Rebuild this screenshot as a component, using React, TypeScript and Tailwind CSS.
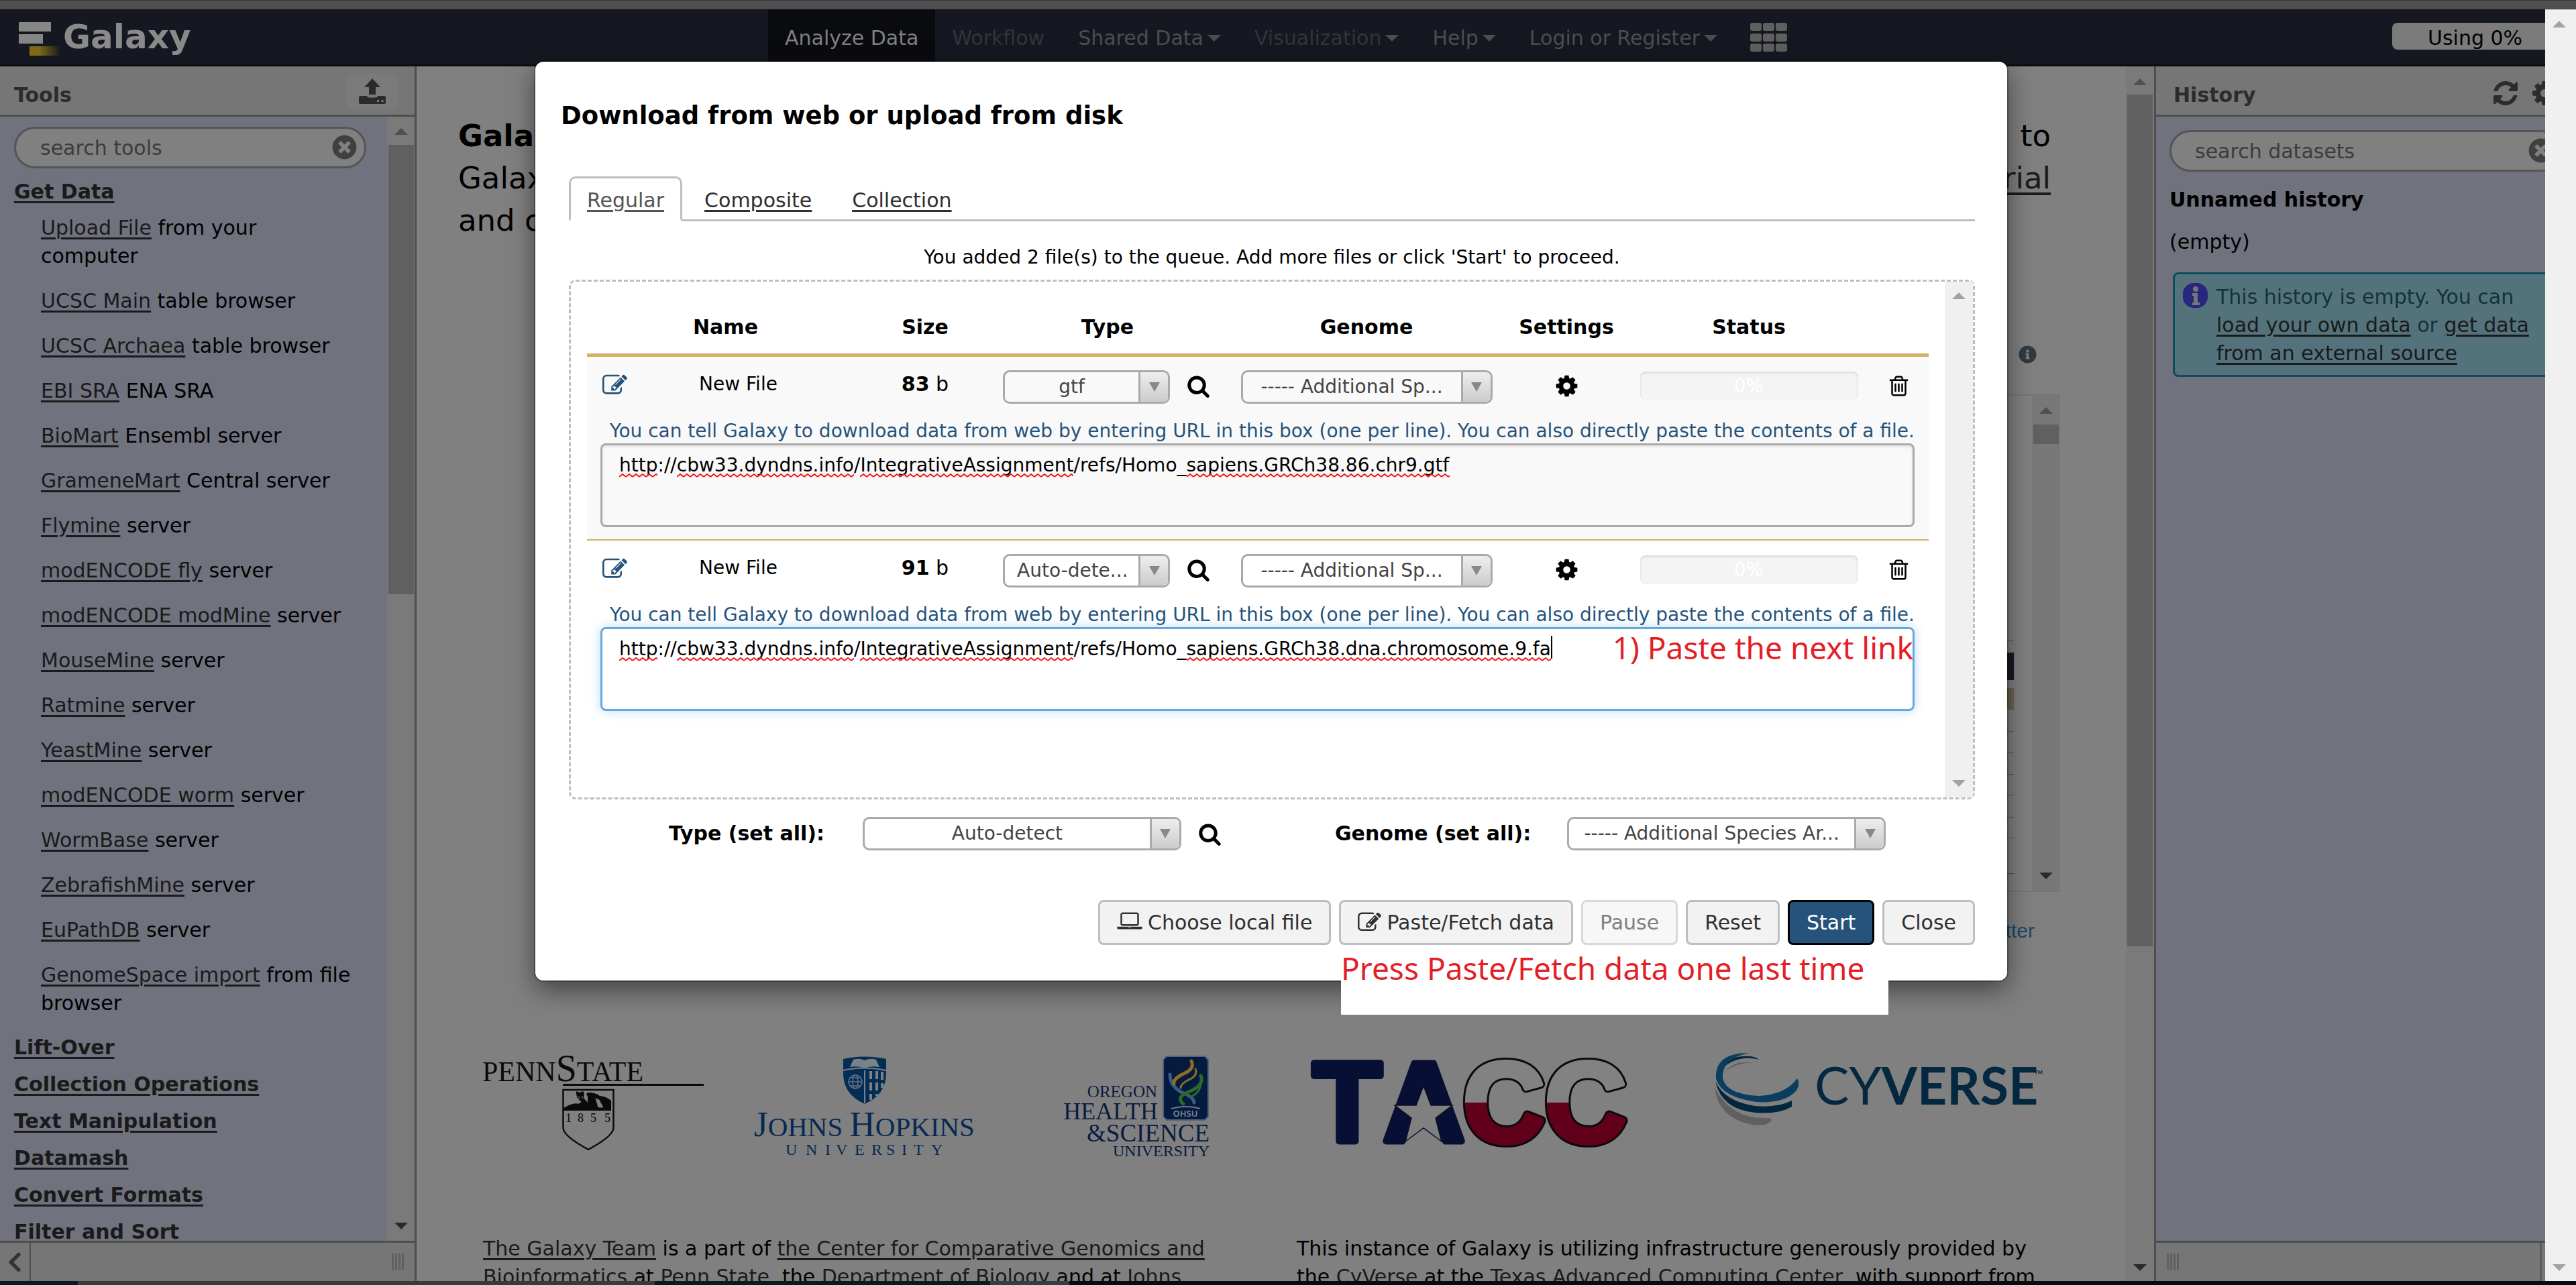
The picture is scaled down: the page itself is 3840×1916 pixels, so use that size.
import type { ReactNode } from "react";
import { FaChevronLeft, FaInfoCircle, FaTimesCircle } from "react-icons/fa";

const ICONS = {
  edit: "M888 1184l116-116-152-152-116 116v56h96v96h56zm440-720q-16-16-33 1l-350 350q-17 17-1 33t33-1l350-350q17-17 1-33zm80 594v190q0 119-84.5 203.5t-203.5 84.5h-832q-119 0-203.5-84.5t-84.5-203.5v-832q0-119 84.5-203.5t203.5-84.5h832q63 0 117 25 15 7 18 23 3 17-9 29l-49 49q-14 14-32 8-23-6-45-6h-832q-66 0-113 47t-47 113v832q0 66 47 113t113 47h832q66 0 113-47t47-113v-126q0-13 9-22l64-64q15-15 35-7t20 29zm-96-738l288 288-672 672h-288v-288zm444 132l-92 92-288-288 92-92q28-28 68-28t68 28l152 152q28 28 28 68t-28 68z",
  trash:
    "M704 736v576q0 14-9 23t-23 9h-64q-14 0-23-9t-9-23v-576q0-14 9-23t23-9h64q14 0 23 9t9 23zm256 0v576q0 14-9 23t-23 9h-64q-14 0-23-9t-9-23v-576q0-14 9-23t23-9h64q14 0 23 9t9 23zm256 0v576q0 14-9 23t-23 9h-64q-14 0-23-9t-9-23v-576q0-14 9-23t23-9h64q14 0 23 9t9 23zm128 724v-948h-896v948q0 22 7 40.5t14.5 27 10.5 8.5h832q3 0 10.5-8.5t14.5-27 7-40.5zm-672-1076h448l-48-117q-7-9-17-11h-317q-10 2-17 11zm928 32v64q0 14-9 23t-23 9h-96v948q0 83-47 143.5t-113 60.5h-832q-66 0-113-58.5t-47-141.5v-952h-96q-14 0-23-9t-9-23v-64q0-14 9-23t23-9h309l70-167q15-37 54-63t79-26h320q40 0 79 26t54 63l70 167h309q14 0 23 9t9 23z",
  cog: "M1152 896q0-106-75-181t-181-75-181 75-75 181 75 181 181 75 181-75 75-181zm512-109v222q0 12-8 23t-20 13l-185 28q-19 54-39 91 35 50 107 138 10 12 10 25t-9 23q-27 37-99 108t-94 71q-12 0-26-9l-138-108q-44 23-91 38-16 136-29 186-7 28-36 28h-222q-14 0-24.5-8.5t-11.5-21.5l-28-184q-49-16-90-37l-141 107q-10 9-25 9-14 0-25-11-126-114-165-168-7-10-7-23 0-12 8-23 15-21 51-66.5t54-70.5q-27-50-41-99l-183-27q-13-2-21-12.5t-8-23.5v-222q0-12 8-23t19-13l186-28q14-46 39-92-40-57-107-138-10-12-10-24 0-10 9-23 26-36 98.5-107.5t94.5-71.5q13 0 26 10l138 107q44-23 91-38 16-136 29-186 7-28 36-28h222q14 0 24.5 8.5t11.5 21.5l28 184q49 16 90 37l142-107q9-9 24-9 13 0 25 10 129 119 165 170 7 8 7 22 0 12-8 23-15 21-51 66.5t-54 70.5q26 50 41 98l183 28q13 2 21 12.5t8 23.5z",
  search:
    "M1216 832q0-185-131.5-316.5t-316.5-131.5-316.5 131.5-131.5 316.5 131.5 316.5 316.5 131.5 316.5-131.5 131.5-316.5zm512 832q0 52-38 90t-90 38q-54 0-90-38l-343-342q-179 124-399 124-143 0-273.5-55.5t-225-150-150-225-55.5-273.5 55.5-273.5 150-225 225-150 273.5-55.5 273.5 55.5 225 150 150 225 55.5 273.5q0 220-124 399l343 343q37 37 37 90z",
  refresh:
    "M1639 1056q0 5-1 7-64 268-268 434.5t-478 166.5q-146 0-282.5-55t-243.5-157l-129 129q-19 19-45 19t-45-19-19-45v-448q0-26 19-45t45-19h448q26 0 45 19t19 45-19 45l-137 137q71 66 161 102t187 36q134 0 250-65t186-179q11-17 53-117 8-23 30-23h192q13 0 22.5 9.5t9.5 22.5zm25-800v448q0 26-19 45t-45 19h-448q-26 0-45-19t-19-45 19-45l138-138q-148-137-349-137-134 0-250 65t-186 179q-11 17-53 117-8 23-30 23h-199q-13 0-22.5-9.5t-9.5-22.5v-7q65-268 270-434.5t480-166.5q146 0 284 55.5t245 156.5l130-129q19-19 45-19t45 19 19 45z",
};

const LAPTOP =
  "M416 1152q-66 0-113-47t-47-113v-704q0-66 47-113t113-47h1088q66 0 113 47t47 113v704q0 66-47 113t-113 47h-1088zm-32-864v704q0 13 9.5 22.5t22.5 9.5h1088q13 0 22.5-9.5t9.5-22.5v-704q0-13-9.5-22.5t-22.5-9.5h-1088q-13 0-22.5 9.5t-9.5 22.5zm1376 928h160v96q0 40-47 68t-113 28h-1600q-66 0-113-28t-47-68v-96h1760zm-720 96q16 0 16-16t-16-16h-160q-16 0-16 16t16 16h160z";

function Icon({ name, className }: { name: keyof typeof ICONS; className: string }) {
  return (
    <svg viewBox="0 0 1792 1792" className={className} fill="currentColor" aria-hidden="true">
      <path d={ICONS[name]} />
    </svg>
  );
}

function Arrow({ up = false, className = "" }: { up?: boolean; className?: string }) {
  return (
    <svg viewBox="0 0 20 10" className={`h-[10px] w-5 shrink-0 ${className}`} fill="currentColor" aria-hidden="true">
      <path d={up ? "M10 0 20 10H0Z" : "M0 0H20L10 10Z"} />
    </svg>
  );
}

const link = "underline decoration-[3px] underline-offset-[4px] text-[#1a1a1a]";

function A({ children, className = link }: { children: ReactNode; className?: string }) {
  return (
    <a href="#" className={className}>
      {children}
    </a>
  );
}

/* ---------- Masthead ---------- */

function NavItem({ label, caret = false, tone }: { label: string; caret?: boolean; tone: string }) {
  return (
    <a href="#" className={`flex h-full items-center px-[25px] pt-1 ${tone}`}>
      {label}
      {caret && <Arrow className="ml-1.5 text-[#4d4d4d]" />}
    </a>
  );
}

function Masthead() {
  return (
    <header className="flex h-[85px] shrink-0 items-stretch border-b-[3px] border-[#0c0c12] bg-[#151820]">
      <a href="#" className="flex w-[1145px] items-start pl-7 text-[50px] font-bold leading-[58px] text-[#8a8a8a]">
        <svg viewBox="0 0 66 54" className="mt-[18px] h-[54px] w-[66px]" aria-hidden="true">
          <defs>
            <linearGradient id="tail" x1="0" x2="1">
              <stop offset="0.3" stopColor="#7d6c15" />
              <stop offset="1" stopColor="#7d6c15" stopOpacity="0" />
            </linearGradient>
          </defs>
          <rect x="0" y="1" width="48" height="14" fill="#868686" />
          <rect x="0" y="19" width="36" height="14" fill="#868686" />
          <rect x="16" y="37" width="46" height="14" fill="url(#tail)" />
        </svg>
        <span className="mt-3">Galaxy</span>
      </a>
      <nav className="flex h-full items-center">
        <NavItem label="Analyze Data" tone="bg-[#0a0b0f] text-[#808080]" />
        <NavItem label="Workflow" tone="text-[#33343a]" />
        <NavItem label="Shared Data" caret tone="text-[#4d4d4d]" />
        <NavItem label="Visualization" caret tone="text-[#33343a]" />
        <NavItem label="Help" caret tone="text-[#4d4d4d]" />
        <NavItem label="Login or Register" caret tone="text-[#4d4d4d]" />
        <a href="#" aria-label="Apps" className="ml-6">
          <svg viewBox="0 0 56 43" className="h-[43px] w-14" fill="#5f5f5f" aria-hidden="true">
            {[0, 19, 38].map((x) =>
              [0, 16, 31].map((y) => <rect key={`${x}-${y}`} x={x} y={y} width="17" height="12" rx="3" />),
            )}
          </svg>
        </a>
      </nav>
      <div className="ml-auto mt-5 h-10 w-[228px] rounded-l-lg bg-[#7b7b7b] pl-[53px] leading-[46px] text-black">
        Using 0%
      </div>
    </header>
  );
}

/* ---------- Tool panel ---------- */

const tools: [string, string][] = [
  ["Upload File", "from your computer"],
  ["UCSC Main", "table browser"],
  ["UCSC Archaea", "table browser"],
  ["EBI SRA", "ENA SRA"],
  ["BioMart", "Ensembl server"],
  ["GrameneMart", "Central server"],
  ["Flymine", "server"],
  ["modENCODE fly", "server"],
  ["modENCODE modMine", "server"],
  ["MouseMine", "server"],
  ["Ratmine", "server"],
  ["YeastMine", "server"],
  ["modENCODE worm", "server"],
  ["WormBase", "server"],
  ["ZebrafishMine", "server"],
  ["EuPathDB", "server"],
  ["GenomeSpace import", "from file browser"],
];

const sections = [
  "Lift-Over",
  "Collection Operations",
  "Text Manipulation",
  "Datamash",
  "Convert Formats",
  "Filter and Sort",
];

function Grip() {
  return (
    <span className="flex h-[25px] gap-0.5" aria-hidden="true">
      <i className="w-[3px] bg-[#606060]" />
      <i className="w-[3px] bg-[#606060]" />
      <i className="w-[3px] bg-[#606060]" />
      <i className="w-[3px] bg-[#606060]" />
    </span>
  );
}

function ToolPanel() {
  return (
    <aside className="flex w-[621px] shrink-0 flex-col border-r-[3px] border-[#4e4e4e]">
      <div className="flex h-[75px] shrink-0 items-start justify-between border-b-[3px] border-[#4e4e4e] bg-[#767676] pl-[21px] pr-[25px]">
        <h2 className="mt-[22px] font-bold leading-[42px] text-[#2c2c2c]">Tools</h2>
        <button
          aria-label="Upload"
          className="mt-2.5 flex h-[54px] w-[76px] items-center justify-center rounded-lg bg-[#7a7a7a] text-[#2b2b2b]"
        >
          <svg viewBox="0 0 40 38" className="h-[38px] w-10" fill="currentColor" aria-hidden="true">
            <path d="M20 0 32 13H25V24H15V13H8Z" />
            <path
              fillRule="evenodd"
              d="M2 26H11.500Q13 28.500 16 28.500H24Q27 28.500 28.500 26H38Q40 26 40 28V36Q40 38 38 38H2Q0 38 0 36V28Q0 26 2 26ZM27 32V35H30V32ZM33.500 32V35H36.500V32Z"
            />
          </svg>
        </button>
      </div>
      <div className="flex min-h-0 flex-1 bg-[#70727e]">
        <div className="min-w-0 flex-1 overflow-hidden pl-[21px] pt-[15px]">
          <div className="relative w-[525px]">
            <input
              aria-label="search tools"
              placeholder="search tools"
              className="h-[62px] w-full rounded-full border-[3px] border-[#555] bg-[#808080] pl-9 text-[#3c3c3c] placeholder:text-[#3c3c3c]"
            />
            <FaTimesCircle className="absolute right-[14px] top-[12px] size-[37px] text-[#404040]" />
          </div>
          <h3 className="mt-[14px] font-bold leading-[42px]">
            <A>Get Data</A>
          </h3>
          <ul className="mt-3 flex flex-col gap-[25px] pl-10 pr-12 leading-[42px] text-black">
            {tools.map(([name, rest]) => (
              <li key={name}>
                <A>{name}</A> {rest}
              </li>
            ))}
          </ul>
          <ul className="mt-6 flex flex-col gap-[13px] font-bold leading-[42px]">
            {sections.map((s) => (
              <li key={s} className="shrink-0">
                <A>{s}</A>
              </li>
            ))}
          </ul>
        </div>
        <div className="flex w-[41px] flex-col items-center bg-[#7a7a7a] pb-[17px] pt-[17px]">
          <Arrow up className="text-[#505050]" />
          <div className="mt-[15px] h-[670px] w-[38px] bg-[#606060]" />
          <Arrow className="mt-auto text-[#2a2a2a]" />
        </div>
      </div>
      <div className="flex h-[60px] shrink-0 items-center border-t-[3px] border-[#4e4e4e] bg-[#767676]">
        <button
          aria-label="Collapse panel"
          className="flex h-full w-[46px] items-center justify-center border-r-2 border-[#4e4e4e] text-[#333]"
        >
          <FaChevronLeft className="size-[34px]" />
        </button>
        <div className="ml-auto mr-4">
          <Grip />
        </div>
      </div>
    </aside>
  );
}

/* ---------- Sponsor logos ---------- */

function PennState() {
  return (
    <svg viewBox="720 1566 366 164" className="h-[164px] w-[366px]" role="img" aria-label="Penn State">
      <g fill="#0a0a0a" fontFamily="Liberation Serif">
        <text x="719" y="1612" fontSize="42">
          PENN<tspan fontSize="56">S</tspan>TATE
        </text>
        <text y="1673" fontSize="18" x="843 861 880 901">
          1855
        </text>
        <rect x="839" y="1616" width="210" height="3" />
      </g>
      <path
        d="M839.500 1625H914.500V1682Q914 1694 877 1714Q840 1694 839.500 1682Z"
        fill="none"
        stroke="#0d0d0d"
        strokeWidth="2.500"
      />
      <path
        d="M840 1656V1652L848 1648Q858 1644 862 1646L867 1643Q858 1638 859 1627L864 1629 869 1627Q872 1630 870 1637L876 1644V1634Q872 1632 876 1629Q888 1629 894 1634Q904 1635 911 1641V1656Z"
        fill="#0a0a0a"
      />
      <path d="M888 1638 892 1651H899L893 1640ZM863 1634V1640M868 1634V1639" fill="#808080" stroke="#777" />
    </svg>
  );
}

function JohnsHopkins() {
  return (
    <svg viewBox="1086 1566 432 164" className="h-[164px] w-[432px]" role="img" aria-label="Johns Hopkins University">
      <path d="M1257 1579Q1290 1572 1321 1579V1600Q1321 1632 1289 1646Q1257 1632 1257 1600Z" fill="#032d55" />
      <path
        d="M1267 1591 1272 1580Q1281 1577 1289 1581Q1298 1577 1306 1580L1311 1591Q1298 1589 1289 1593Q1280 1589 1267 1591Z"
        fill="#7a8188"
      />
      <path d="M1257 1596Q1289 1589 1321 1596" stroke="#7a8188" strokeWidth="2" fill="none" />
      <path d="M1289 1596V1645" stroke="#7a8188" strokeWidth="2" />
      <path d="M1298 1597V1640M1307 1597V1634M1315 1598V1622" stroke="#7a8188" strokeWidth="4" strokeDasharray="12 5" />
      <g fill="none" stroke="#5f7286" strokeWidth="1.500">
        <ellipse cx="1275" cy="1613" rx="10" ry="10" />
        <ellipse cx="1275" cy="1613" rx="4" ry="10" />
        <path d="M1265 1613H1285M1267 1607H1283M1267 1619H1283" />
      </g>
      <g fill="#062a52" fontFamily="Liberation Serif">
        <text x="1124" y="1694" fontSize="41">
          <tspan fontSize="53">J</tspan>OHNS <tspan fontSize="53">H</tspan>OPKINS
        </text>
        <text y="1722" fontSize="24" x="1171 1201 1230 1246 1274 1299 1321 1344 1362 1388">
          UNIVERSITY
        </text>
      </g>
    </svg>
  );
}

function Ohsu() {
  return (
    <svg
      viewBox="1518 1566 362 164"
      className="h-[164px] w-[362px]"
      role="img"
      aria-label="Oregon Health and Science University"
    >
      <path
        d="M1739 1575H1796L1801 1580V1665L1796 1670H1739L1734 1665V1580Z"
        fill="#041b3f"
        stroke="#52647c"
        strokeWidth="2"
      />
      <g fill="none" strokeLinecap="round" strokeWidth="5">
        <path d="M1744 1602Q1744 1618 1760 1628Q1780 1636 1780 1644" stroke="#3d5a84" />
        <path d="M1776 1582Q1782 1594 1762 1602Q1748 1610 1750 1616" stroke="#8c6d22" />
        <path d="M1782 1594Q1786 1604 1772 1610Q1760 1616 1760 1622" stroke="#8c6d22" strokeWidth="3" />
        <path d="M1790 1604Q1796 1618 1772 1628Q1752 1636 1764 1646" stroke="#2c6a2c" />
        <path d="M1790 1610Q1792 1628 1774 1636" stroke="#2c6a2c" strokeWidth="3" />
      </g>
      <path d="M1746 1653Q1767 1647 1789 1653" stroke="#6d7885" strokeWidth="2" fill="none" />
      <text x="1767" y="1665" fontSize="13" fontFamily="Noto Sans" fontWeight="600" fill="#7f868e" textAnchor="middle">
        OHSU
      </text>
      <g fill="#0a1c3f" fontFamily="Liberation Serif">
        <text x="1725" y="1636" fontSize="25" textAnchor="end">
          OREGON
        </text>
        <text x="1726" y="1669" fontSize="36" textAnchor="end">
          HEALTH
        </text>
        <text x="1803" y="1702" fontSize="37" textAnchor="end">
          &amp;SCIENCE
        </text>
        <text x="1803" y="1724" fontSize="24" textAnchor="end">
          UNIVERSITY
        </text>
      </g>
    </svg>
  );
}

function Tacc() {
  return (
    <svg viewBox="1880 1566 609 164" className="h-[164px] w-[609px]" role="img" aria-label="TACC">
      <defs>
        <linearGradient id="texas" gradientUnits="userSpaceOnUse" x1="0" x2="0" y1="1583" y2="1705">
          <stop offset="0.500" stopColor="#828282" />
          <stop offset="0.500" stopColor="#60001a" />
        </linearGradient>
      </defs>
      <g fontFamily="Liberation Sans" fontWeight="700" fontSize="168" strokeLinejoin="round">
        <text y="1702" x="1957 2062" fill="#070f35" stroke="#070f35" strokeWidth="10">
          TA
        </text>
        <text y="1702" x="2181 2303" fill="url(#texas)" stroke="#0a0a0a" strokeWidth="14">
          CC
        </text>
        <text y="1702" x="2181 2303" fill="url(#texas)" stroke="url(#texas)" strokeWidth="8" aria-hidden="true">
          CC
        </text>
      </g>
      <path
        d="M2122 1619 2133 1648H2165L2140 1667 2149 1702 2122 1682 2095 1702 2104 1667 2079 1648H2111Z"
        fill="#808080"
        stroke="#0a0f25"
        strokeWidth="1.500"
      />
    </svg>
  );
}

function CyVerse() {
  return (
    <svg viewBox="2489 1566 580 164" className="h-[164px] w-[580px]" role="img" aria-label="CyVerse">
      <path d="M2556 1622Q2562 1668 2612 1677Q2636 1680 2641 1670Q2640 1666 2632 1667Q2580 1668 2556 1622Z" fill="#606060" />
      <path d="M2634 1588Q2600 1578 2572 1597Q2584 1583 2602 1584Q2622 1584 2634 1588Z" fill="#606060" />
      <path
        d="M2557 1612Q2566 1654 2616 1659Q2652 1662 2671 1650V1641Q2650 1652 2616 1649Q2570 1642 2557 1612Z"
        fill="#02263d"
      />
      <path d="M2622 1580Q2590 1572 2566 1594Q2576 1576 2598 1575Q2616 1574 2622 1580Z" fill="#02263d" />
      <path
        d="M2607 1570Q2566 1578 2568 1608Q2574 1632 2622 1634Q2662 1632 2679 1608Q2684 1616 2678 1626Q2660 1646 2618 1643Q2566 1636 2558 1608Q2556 1570 2607 1570Z"
        fill="#0a3d60"
      />
      <g fontFamily="Lato" fill="#04283f" fontSize="77">
        <text x="2705" y="1647">
          CY<tspan fontWeight="700">VERSE</tspan>
          <tspan fontSize="18" dy="-38" dx="-6">
            ™
          </tspan>
        </text>
      </g>
    </svg>
  );
}

/* ---------- Centre page ---------- */

function StatusWidget() {
  return (
    <div className="flex h-[742px] w-[700px] shrink-0 justify-end border-y-2 border-[#757575]">
      <div className="flex flex-1 flex-col pr-[27px] pt-[365px]" aria-hidden="true">
        <div className="h-px bg-[#555]" />
        <div className="mt-[17px] h-[41px] bg-[#171a25]" />
        <div className="mt-[12px] h-8 border-b border-[#5b5238] bg-[#6c6350]" />
        <div className="mt-8 h-px bg-[#555]" />
        <div className="mt-[30px] h-px bg-[#555]" />
        <div className="mt-8 h-px bg-[#555]" />
        <div className="mt-[30px] h-px bg-[#555]" />
        <div className="mt-[32px] h-px bg-[#555]" />
        <div className="mt-[30px] h-px bg-[#555]" />
        <div className="mt-[52px] h-px bg-[#555]" />
      </div>
      <div className="flex w-[42px] flex-col items-center bg-[#787878] py-[17px]">
        <Arrow up className="text-[#505050]" />
        <div className="mt-4 h-[29px] w-[38px] bg-[#606060]" />
        <Arrow className="mt-auto text-[#2a2a2a]" />
      </div>
    </div>
  );
}

function Center() {
  return (
    <main className="flex min-w-0 flex-1 bg-[#808080] text-black">
      <div className="flex min-w-0 flex-1 flex-col overflow-hidden pl-[62px] pr-[98px] pt-[72px]">
        <div className="shrink-0 pr-[14px] text-[45px] leading-[63px]">
          <p className="flex justify-between">
            <strong>Galaxy is an open</strong>
            <span>to</span>
          </p>
          <p className="flex justify-between">
            <span>Galaxy team</span>
            <A className="text-[#1a1a1a] underline decoration-[4px] underline-offset-[6px]">tutorial</A>
          </p>
          <p>and consult</p>
        </div>
        <div className="mt-[155px] flex shrink-0 flex-col items-end">
          <FaInfoCircle className="mr-[35px] size-[27px] text-[#303a40]" />
          <div className="mt-[46px]">
            <StatusWidget />
          </div>
          <A className="mr-[38px] mt-[37px] font-['Liberation_Sans'] leading-[42px] text-[#1c4866]">Twitter</A>
        </div>
        <div className="ml-[37px] mt-[157px] flex shrink-0">
          <PennState />
          <JohnsHopkins />
          <Ohsu />
          <Tacc />
          <CyVerse />
        </div>
        <div className="ml-[37px] mt-[111px] flex shrink-0 whitespace-nowrap leading-[42px]">
          <p className="w-[1213px]">
            <A>The Galaxy Team</A> is a part of <A>the Center for Comparative Genomics and</A>
            <br />
            <A>Bioinformatics</A> at <A>Penn State</A>, the <A>Department of Biology</A> and at <A>Johns</A>
          </p>
          <p>
            This instance of Galaxy is utilizing infrastructure generously provided by
            <br />
            the <A>CyVerse</A> at the <A>Texas Advanced Computing Center</A>, with support from
          </p>
        </div>
      </div>
      <div className="flex w-[42px] shrink-0 flex-col items-center bg-[#7a7a7a] pb-[15px] pt-[18px]">
        <Arrow up className="text-[#505050]" />
        <div className="mt-[14px] h-[1270px] w-[38px] bg-[#606060]" />
        <Arrow className="mt-auto text-[#2a2a2a]" />
      </div>
    </main>
  );
}

/* ---------- History panel ---------- */

function HistoryPanel() {
  return (
    <aside className="flex w-[583px] shrink-0 flex-col overflow-hidden border-l-[3px] border-[#4e4e4e]">
      <div className="flex h-[75px] shrink-0 items-start border-b-[3px] border-[#4e4e4e] bg-[#767676] pl-[26px] text-[#2c2c2c]">
        <h2 className="mt-[22px] font-bold leading-[42px]">History</h2>
        <div className="-mr-5 ml-auto mt-[19px] flex gap-4">
          <button aria-label="Refresh history">
            <Icon name="refresh" className="size-[42px]" />
          </button>
          <button aria-label="History options">
            <Icon name="cog" className="size-[42px]" />
          </button>
        </div>
      </div>
      <div className="min-h-0 flex-1 bg-[#70727e] pl-5 pt-5">
        <div className="relative -mr-6">
          <input
            aria-label="search datasets"
            placeholder="search datasets"
            className="h-[62px] w-full rounded-full border-[3px] border-[#555] bg-[#808080] pl-[35px] text-[#3c3c3c] placeholder:text-[#3c3c3c]"
          />
          <FaTimesCircle className="absolute right-[12px] top-[12px] size-[37px] text-[#404040]" />
        </div>
        <h3 className="mt-[21px] font-bold leading-[42px] text-black">Unnamed history</h3>
        <p className="mt-[21px] leading-[42px] text-black">(empty)</p>
        <div className="-mr-3 ml-[5px] mt-6 flex h-[156px] rounded-lg border-[3px] border-[#0e4b5b] bg-[#53727b] pl-3 pt-[13px]">
          <span className="flex h-[37px] w-[37px] shrink-0 items-center justify-center rounded-2xl bg-[#29267d]">
            <svg viewBox="0 0 12 28" className="h-7 w-3" fill="#777" aria-hidden="true">
              <circle cx="6" cy="4" r="4" />
              <path d="M1 10H9V24H12V28H1V24H3V14H1Z" />
            </svg>
          </span>
          <p className="ml-[13px] whitespace-nowrap leading-[42px] text-[#143239]">
            This history is empty. You can
            <br />
            <A>load your own data</A> or <A>get data</A>
            <br />
            <A>from an external source</A>
          </p>
        </div>
      </div>
      <div className="flex h-[60px] shrink-0 items-center border-t-[3px] border-[#4e4e4e] bg-[#767676] pl-4">
        <Grip />
        <i className="ml-auto mr-[5px] h-full w-[3px] bg-[#5c5c5c]" />
      </div>
    </aside>
  );
}

/* ---------- Upload dialog ---------- */

function Select({ label, value, className }: { label: string; value: string; className: string }) {
  return (
    <span className={`relative block h-[50px] ${className}`}>
      <select
        aria-label={label}
        className="h-full w-full appearance-none rounded-[10px] border-[3px] border-[#aaa] bg-transparent pl-[18px] pr-[62px] text-[28px] text-[#444] [text-align-last:center]"
      >
        <option>{value}</option>
      </select>
      <span className="pointer-events-none absolute inset-y-[3px] right-[3px] flex w-11 items-center justify-center rounded-r-lg border-l-[3px] border-[#aaa] bg-linear-to-b from-[#eee] to-[#ccc]">
        <svg viewBox="0 0 16 14" className="h-[14px] w-4" fill="#888" aria-hidden="true">
          <path d="M0 0H16L8 14Z" />
        </svg>
      </span>
    </span>
  );
}

const TEXT_FONT = '28px "DejaVu Sans"';

function textWidth(text: string) {
  const ctx = document.createElement("canvas").getContext("2d")!;
  ctx.font = TEXT_FONT;
  return Math.round(ctx.measureText(text).width);
}

/* Spell-checker waves under the words of the URL, and the caret of a focused box. */
function SpellMarks({ text, words, caret }: { text: string; words: string[]; caret: boolean }) {
  return (
    <div className="pointer-events-none absolute left-7 top-0" aria-hidden="true">
      {words.map((w) => {
        const left = textWidth(text.slice(0, text.indexOf(w)));
        const width = textWidth(w);
        return (
          <svg key={w} className="absolute top-[45px] h-[6px]" style={{ left, width }}>
            <defs>
              <pattern id={`wave-${w.length}`} width="10" height="6" patternUnits="userSpaceOnUse">
                <path d="M0 5 5 1 10 5" fill="none" stroke="#f01818" strokeWidth="2" />
              </pattern>
            </defs>
            <rect width="100%" height="6" fill={`url(#wave-${w.length})`} />
          </svg>
        );
      })}
      {caret && <i className="absolute top-[13px] h-[34px] w-0.5 bg-black" style={{ left: textWidth(text) }} />}
    </div>
  );
}

type FileRow = { size: string; type: string; url: string; tail: string; active: boolean };

const files: FileRow[] = [
  {
    size: "83",
    type: "gtf",
    url: "http://cbw33.dyndns.info/IntegrativeAssignment/refs/Homo_sapiens.GRCh38.86.chr9.gtf",
    tail: "sapiens.GRCh38.86.chr9.gtf",
    active: false,
  },
  {
    size: "91",
    type: "Auto-dete...",
    url: "http://cbw33.dyndns.info/IntegrativeAssignment/refs/Homo_sapiens.GRCh38.dna.chromosome.9.fa",
    tail: "sapiens.GRCh38.dna.chromosome.9.fa",
    active: true,
  },
];

function FileRows({ file }: { file: FileRow }) {
  const tone = file.active ? "" : "bg-[#f9f9f9]";
  const cell = "p-0 pt-5 align-top";
  return (
    <tbody className={tone}>
      <tr>
        <td className={cell}>
          <button aria-label="Edit file" className="ml-[23px] flex h-[44px] items-center text-[#25537b]">
            <Icon name="edit" className="size-[37px]" />
          </button>
        </td>
        <td className={`${cell} pr-[45px] text-center text-[28px] leading-[42px]`}>New File</td>
        <td className={`${cell} text-center leading-[42px]`}>
          <b>{file.size}</b> b
        </td>
        <td className={cell}>
          <div className="flex pl-[25px]">
            <Select label="Type" value={file.type} className="w-[249px]" />
            <button aria-label="Type details" className="ml-[25px] flex h-[46px] items-center">
              <Icon name="search" className="size-[35px]" />
            </button>
          </div>
        </td>
        <td className={cell}>
          <Select label="Genome" value="----- Additional Sp..." className="mx-auto w-[375px]" />
        </td>
        <td className={cell}>
          <button aria-label="Settings" className="mx-auto flex h-[46px] items-center">
            <Icon name="cog" className="size-[37px]" />
          </button>
        </td>
        <td className={cell}>
          <div className="mx-auto mt-0.5 h-[43px] w-[325px] rounded-lg bg-[#f4f4f4] text-center text-[28px] leading-[44px] text-white shadow-[inset_0_2px_4px_rgba(0,0,0,0.12)]">
            0%
          </div>
        </td>
        <td className={cell}>
          <button aria-label="Remove file" className="mx-auto flex h-[46px] items-center">
            <Icon name="trash" className="size-[35px]" />
          </button>
        </td>
      </tr>
      <tr className="border-b-2 border-[#d2b062] [tbody:last-child>&]:border-0">
        <td colSpan={8} className="p-0 pb-[18px] pl-5 pr-[21px] pt-[23px]">
          <p className="whitespace-nowrap pl-[14px] text-[28px] leading-9 text-[#25537b]">
            You can tell Galaxy to download data from web by entering URL in this box (one per line). You can also
            directly paste the contents of a file.
          </p>
          <div className="relative">
            <textarea
              aria-label="URLs or file contents"
              spellCheck={false}
              defaultValue={file.url}
              className={`block h-[125px] w-full resize-none rounded-lg border-[3px] bg-transparent px-[25px] py-[9px] text-[28px] leading-[42px] text-black ${
                file.active
                  ? "border-[#66a8dd] shadow-[0_0_16px_rgba(102,175,233,0.45)]"
                  : "border-[#aaa] shadow-[inset_0_2px_4px_rgba(0,0,0,0.1)]"
              }`}
            />
            <SpellMarks
              text={file.url}
              words={["http", "cbw33.dyndns.info", "IntegrativeAssignment", file.tail]}
              caret={file.active}
            />
            {file.active && (
              <span className="absolute right-0.5 top-0 whitespace-nowrap font-['Noto_Sans'] text-[46px] leading-[60px] text-[#e41e26]">
                1) Paste the next link
              </span>
            )}
          </div>
        </td>
      </tr>
    </tbody>
  );
}

function Tab({ label, active = false }: { label: string; active?: boolean }) {
  return (
    <button
      role="tab"
      aria-selected={active}
      className={`-mb-[3px] h-[67px] rounded-t-[10px] border-[3px] px-6 pt-1 underline decoration-[3px] underline-offset-[4px] ${
        active ? "border-[#bebebe] border-b-white bg-white text-[#555]" : "border-transparent text-[#303030]"
      }`}
    >
      {label}
    </button>
  );
}

function Btn({ children, tone = "border-[#bebebe] bg-[#f2f2f2] text-[#303030]" }: { children: ReactNode; tone?: string }) {
  return (
    <button className={`flex h-[67px] items-center gap-2 rounded-lg border-[3px] px-[25px] ${tone}`}>{children}</button>
  );
}

function UploadDialog() {
  return (
    <div className="absolute inset-0 flex items-start justify-center pr-[50px] pt-[92px]">
      <section
        role="dialog"
        aria-label="Download from web or upload from disk"
        className="relative w-full max-w-[2194px] rounded-xl bg-white pb-[53px] pl-[50px] pr-[48px] pt-[56px] text-black shadow-[0_0_0_2px_rgba(0,0,0,0.25),0_13px_38px_rgba(0,0,0,0.5)]"
      >
        <h1 className="-ml-3 text-[37px] font-bold leading-[50px]">Download from web or upload from disk</h1>
        <div role="tablist" className="mt-[65px] flex gap-1.5 border-b-[3px] border-[#bebebe]">
          <Tab label="Regular" active />
          <Tab label="Composite" />
          <Tab label="Collection" />
        </div>
        <p className="mt-[34px] text-center text-[28px] leading-10">
          You added 2 file(s) to the queue. Add more files or click 'Start' to proceed.
        </p>
        <div className="mt-[13px] flex h-[775px] rounded-[10px] border-[3px] border-dashed border-[#bebebe]">
          <div className="min-w-0 flex-1 px-6">
            <table className="w-full table-fixed border-collapse">
              <colgroup>
                <col className="w-[83px]" />
                <col className="w-[330px]" />
                <col className="w-[182px]" />
                <col className="w-[362px]" />
                <col />
                <col className="w-[186px]" />
                <col className="w-[358px]" />
                <col className="w-[89px]" />
              </colgroup>
              <thead>
                <tr className="border-b-[5px] border-[#d2b062] leading-[42px] [&>th]:p-0 [&>th]:pb-[18px] [&>th]:pt-[47px]">
                  <th colSpan={2}>Name</th>
                  <th>Size</th>
                  <th>Type</th>
                  <th>Genome</th>
                  <th>Settings</th>
                  <th>Status</th>
                  <th />
                </tr>
              </thead>
              {files.map((f) => (
                <FileRows key={f.size} file={f} />
              ))}
            </table>
          </div>
          <div className="flex w-[42px] flex-col items-center justify-between bg-[#f0f0f0] py-4 text-[#a3a3a3]">
            <Arrow up />
            <Arrow />
          </div>
        </div>
        <div className="mt-[26px] flex items-center pl-[149px] font-bold">
          <span>Type (set all):</span>
          <Select label="Type (set all)" value="Auto-detect" className="ml-[57px] w-[475px] font-normal" />
          <button aria-label="Type details" className="ml-[25px]">
            <Icon name="search" className="size-[35px]" />
          </button>
          <span className="ml-[169px]">Genome (set all):</span>
          <Select
            label="Genome (set all)"
            value="----- Additional Species Ar..."
            className="ml-[54px] w-[475px] font-normal"
          />
        </div>
        <div className="mt-[74px] flex justify-end gap-3">
          <Btn>
            <svg viewBox="0 0 1920 1792" className="h-[35px] w-[38px]" fill="currentColor" aria-hidden="true">
              <path d={LAPTOP} />
            </svg>
            Choose local file
          </Btn>
          <Btn>
            <Icon name="edit" className="size-[35px]" />
            Paste/Fetch data
          </Btn>
          <Btn tone="border-[#d8d8d8] bg-[#f7f7f7] text-[#808080]">Pause</Btn>
          <Btn>Reset</Btn>
          <Btn tone="border-black bg-[#25537b] text-white">Start</Btn>
          <Btn>Close</Btn>
        </div>
        <p className="absolute left-[1201px] top-[1320px] h-[101px] w-[816px] whitespace-nowrap bg-white font-['Noto_Sans'] text-[46px] leading-[62px] text-[#e41e26]">
          Press Paste/Fetch data one last time
        </p>
      </section>
    </div>
  );
}

export default function App() {
  return (
    <div className="relative flex h-screen flex-col overflow-hidden bg-[#808080] font-['DejaVu_Sans',Verdana,sans-serif] text-[30px] leading-[42px]">
      <div className="h-[14px] shrink-0 border-b border-t border-[#3a3a3c] bg-[#505050]" />
      <div className="flex min-h-0 flex-1">
        <div className="flex min-w-0 flex-1 flex-col">
          <Masthead />
          <div className="flex min-h-0 flex-1">
            <ToolPanel />
            <Center />
            <HistoryPanel />
          </div>
        </div>
        <div className="z-10 flex w-[46px] shrink-0 flex-col items-center justify-between bg-[#f0f0f0] pb-[15px] pr-1 pt-[17px] text-[#a3a3a3]">
          <Arrow up />
          <Arrow />
        </div>
      </div>
      <div className="flex h-1.5 shrink-0 bg-[#050d10]">
        <div className="w-[116px] bg-[#0c1a1f]" />
        <div className="w-[860px] bg-[#3a3a3a]" />
        <div className="w-[500px] bg-[#0c1a1c]" />
        <div className="w-[118px] bg-[#343f42]" />
      </div>
      <UploadDialog />
    </div>
  );
}
